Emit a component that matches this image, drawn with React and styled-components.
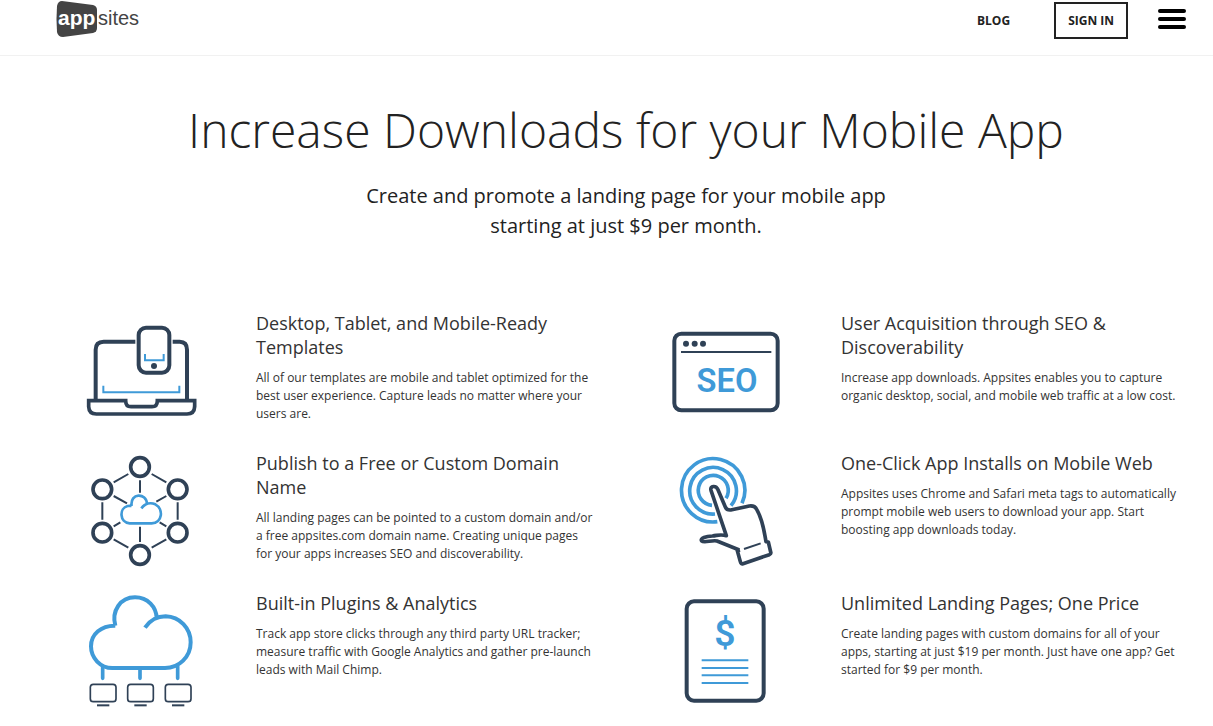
import React from "react";
import styled, { createGlobalStyle } from "styled-components";

const NAVY = "#2f4156";
const BLUE = "#3f9ad8";

const GlobalStyle = createGlobalStyle`
  *, *::before, *::after { box-sizing: border-box; }
  body {
    margin: 0;
    background: #fff;
    color: #222;
    font-family: "Open Sans", "Noto Sans", sans-serif;
    overflow-x: hidden;
  }
  h1, h2, p { margin: 0; }
`;

const Header = styled.header`
  display: flex;
  align-items: flex-start;
  justify-content: space-between;
  height: 56px;
  padding: 0 27px 0 56px;
  border-bottom: 1px solid #f1f1f1;
`;

const LogoLink = styled.a`
  display: block;
  height: 38px;
`;

const Nav = styled.nav`
  display: flex;
  align-items: center;
  padding-top: 2px;
`;

const NavLink = styled.a`
  margin-right: 44px;
  color: #222;
  font-size: 12px;
  font-weight: 700;
  line-height: 18px;
  text-decoration: none;
`;

const SignInButton = styled.button`
  height: 37px;
  padding: 0 12px;
  margin-right: 30px;
  border: 2px solid #222;
  background: #fff;
  color: #222;
  font: 700 12px/18px "Open Sans", "Noto Sans", sans-serif;
  cursor: pointer;
`;

const MenuButton = styled.button`
  display: flex;
  flex-direction: column;
  gap: 4px;
  width: 28px;
  height: 24px;
  padding: 0;
  border: 0;
  background: none;
  cursor: pointer;
`;

const MenuBar = styled.span`
  height: 4px;
  border-radius: 2px;
  background: #000;
`;

const Main = styled.main`
  padding: 0 2px 0 41px;
`;

const Hero = styled.section`
  padding-top: 41px;
  text-align: center;
`;

const Title = styled.h1`
  font-size: 48px;
  font-weight: 300;
  line-height: 66px;
`;

const Subtitle = styled.p`
  max-width: 560px;
  margin: 18px auto 0;
  font-size: 20px;
  line-height: 30px;
`;

const FeatureGrid = styled.section`
  display: grid;
  grid-template-columns: 1fr 1fr;
  row-gap: 15px;
  padding-top: 69px;
`;

const Feature = styled.article`
  display: flex;
  gap: 46px;
  padding: 0 30px 0 34px;
`;

const Icon = styled.svg`
  flex: none;
  width: 135px;
  height: 125px;
  fill: none;
  stroke-width: ${(p) => p.$stroke || 12};
  stroke: ${NAVY};
`;

const IconText = styled.text`
  fill: ${BLUE};
  stroke: none;
  font-family: Roboto, "Open Sans", sans-serif;
  font-weight: 600;
  font-size: ${(p) => p.$size}px;
  text-anchor: middle;
`;

const FeatureBody = styled.div`
  padding-top: 1px;
`;

const FeatureTitle = styled.h2`
  color: #333;
  font-size: 18px;
  font-weight: 400;
  line-height: 24px;
`;

const FeatureText = styled.p`
  margin-top: 10px;
  color: #333;
  font-size: 12px;
  line-height: 18px;
`;

const LogoText = styled.text`
  font-family: "Liberation Sans", Arial, sans-serif;
  font-size: ${(p) => p.$size}px;
  font-weight: ${(p) => (p.$bold ? 700 : 400)};
  fill: ${(p) => (p.$bold ? "#fff" : "#444")};
`;

function Logo() {
  return (
    <svg width="90" height="38" viewBox="0 0 90 38" role="img" aria-label="appsites">
      <path
        d="M6 1 L37 5 Q41 6 41 10 V28 Q41 32 37 33 L7 37 Q2 37 1 32 Q0 18 1 6 Q2 1 6 1Z"
        fill="#444"
      />
      <LogoText x="2" y="25" $size={21} $bold>app</LogoText>
      <LogoText x="42" y="25" $size={20}>sites</LogoText>
    </svg>
  );
}

function DevicesIcon() {
  return (
    <Icon viewBox="0 0 405 375" aria-hidden="true">
      <g transform="translate(0 15)">
        <path d="M62 256V104Q62 80 86 80H181M293 80H314Q336 80 336 104V256" />
        <path d="M41 257H152Q152 275 168 275H231Q247 275 247 257H359V275Q358 297 336 297H64Q42 297 41 275Z" strokeWidth="11" />
        <rect x="191" y="38" width="92" height="135" rx="22" />
        <circle cx="237" cy="153" r="9" fill={NAVY} stroke="none" />
        <path d="M210 117V136H266V117" stroke={BLUE} strokeWidth="6" />
        <path d="M85 212V232H313V212" stroke={BLUE} strokeWidth="6" />
      </g>
    </Icon>
  );
}

function NetworkIcon() {
  const nodes = [[195, 51], [308, 118], [308, 248], [195, 315], [82, 248], [82, 118]];
  return (
    <Icon viewBox="0 0 405 375" $stroke={11} aria-hidden="true">
      <path
        strokeWidth="6"
        d="M230 72L274 97M308 157V209M274 268L230 293M160 293L116 268M82 209V157M116 97L160 72M195 91V128M195 230V276M116 138L156 160M274 138L244 155M116 229L136 217M274 229L254 217"
      />
      {nodes.map(([x, y]) => (
        <circle key={`${x}-${y}`} cx={x} cy={y} r="28" />
      ))}
      <path
        stroke={BLUE}
        strokeWidth="8"
        d="M170 168C164 127 215 128 216 162M199 175C211 159 228 157 241 163C267 177 262 220 230 220H164C133 218 132 174 158 168Q164 167 170 168"
      />
    </Icon>
  );
}

function CloudIcon() {
  return (
    <Icon viewBox="0 0 405 375" $stroke={12} aria-hidden="true">
      <g stroke={BLUE}>
        <path d="M121 107C109 63 136 22 180 22C219 22 244 51 245 84M210 113C225 91 245 79 272 79C314 80 347 115 347 157C347 201 312 234 270 234H112C76 234 48 204 48 169C48 132 79 106 121 107" />
        <path strokeWidth="11" strokeLinecap="round" d="M83 228V265M195 237V265M308 228V265" />
      </g>
      {[84, 196, 309].map((x) => (
        <g key={x} strokeWidth="5">
          <rect x={x - 38} y="283" width="77" height="52" rx="9" />
          <path strokeWidth="6" d={`M${x - 18} 346H${x + 19}`} />
        </g>
      ))}
    </Icon>
  );
}

function SeoIcon() {
  return (
    <Icon viewBox="0 0 405 375" aria-hidden="true">
      <g transform="translate(0 30)">
        <rect x="43" y="41" width="310" height="230" rx="21" />
        <path strokeWidth="6" d="M63 96H334" />
        {[78, 104, 129].map((x) => (
          <circle key={x} cx={x} cy="71" r="9" fill={NAVY} stroke="none" />
        ))}
        <IconText x="201" y="216" $size={98}>SEO</IconText>
      </g>
    </Icon>
  );
}

function TouchIcon() {
  return (
    <Icon viewBox="0 0 405 375" $stroke={11} aria-hidden="true">
      <g stroke={BLUE}>
        <path d="M172 215A95 95 0 1 1 246 160" />
        <path d="M165 192A70 70 0 1 1 213 167" />
        <path d="M156 166A45 45 0 1 1 198 145" />
      </g>
      <path
        strokeLinejoin="round"
        d="M238 300L171 273C157 269 132 280 125 273C119 264 139 259 157 258C175 256 181 252 199 257L153 121C149 107 168 105 174 119L196 171Q200 181 212 180L268 168Q284 166 290 178C308 208 312 241 318 275L325 276L332 306Q334 311 328 314L249 341Q243 343 241 335L232 302L240 300"
      />
      <path strokeWidth="6" d="M252 297L302 280" />
    </Icon>
  );
}

function PriceIcon() {
  return (
    <Icon viewBox="0 0 405 375" aria-hidden="true">
      <rect x="80" y="34" width="231" height="298" rx="22" />
      <IconText x="195" y="168" $size={112}>$</IconText>
      <path stroke={BLUE} strokeWidth="6" d="M125 211H265M125 234H265M125 256H265M125 279H265" />
    </Icon>
  );
}

const features = [
  {
    icon: DevicesIcon,
    title: "Desktop, Tablet, and Mobile-Ready Templates",
    text: "All of our templates are mobile and tablet optimized for the best user experience. Capture leads no matter where your users are.",
  },
  {
    icon: SeoIcon,
    title: "User Acquisition through SEO & Discoverability",
    text: "Increase app downloads. Appsites enables you to capture organic desktop, social, and mobile web traffic at a low cost.",
  },
  {
    icon: NetworkIcon,
    title: "Publish to a Free or Custom Domain Name",
    text: "All landing pages can be pointed to a custom domain and/or a free appsites.com domain name. Creating unique pages for your apps increases SEO and discoverability.",
  },
  {
    icon: TouchIcon,
    title: "One-Click App Installs on Mobile Web",
    text: "Appsites uses Chrome and Safari meta tags to automatically prompt mobile web users to download your app. Start boosting app downloads today.",
  },
  {
    icon: CloudIcon,
    title: "Built-in Plugins & Analytics",
    text: "Track app store clicks through any third party URL tracker; measure traffic with Google Analytics and gather pre-launch leads with Mail Chimp.",
  },
  {
    icon: PriceIcon,
    title: "Unlimited Landing Pages; One Price",
    text: "Create landing pages with custom domains for all of your apps, starting at just $19 per month. Just have one app? Get started for $9 per month.",
  },
];

export default function App() {
  return (
    <>
      <GlobalStyle />
      <Header>
        <LogoLink href="#">
          <Logo />
        </LogoLink>
        <Nav>
          <NavLink href="#blog">BLOG</NavLink>
          <SignInButton type="button">SIGN IN</SignInButton>
          <MenuButton type="button" aria-label="Menu">
            <MenuBar />
            <MenuBar />
            <MenuBar />
          </MenuButton>
        </Nav>
      </Header>
      <Main>
        <Hero>
          <Title>Increase Downloads for your Mobile App</Title>
          <Subtitle>
            Create and promote a landing page for your mobile app
            <br />
            starting at just $9 per month.
          </Subtitle>
        </Hero>
        <FeatureGrid>
          {features.map(({ icon: FeatureIcon, title, text }) => (
            <Feature key={title}>
              <FeatureIcon />
              <FeatureBody>
                <FeatureTitle>{title}</FeatureTitle>
                <FeatureText>{text}</FeatureText>
              </FeatureBody>
            </Feature>
          ))}
        </FeatureGrid>
      </Main>
    </>
  );
}
